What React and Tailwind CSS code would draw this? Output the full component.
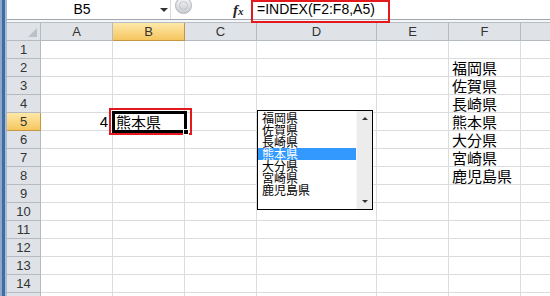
const cols = [
  { k: "A", w: "w-[72px]" },
  { k: "B", w: "w-[72px]" },
  { k: "C", w: "w-[72px]" },
  { k: "D", w: "w-[120px]" },
  { k: "E", w: "w-[72px]" },
  { k: "F", w: "w-[72px]" },
  { k: "G", w: "w-[72px]" },
];

const prefs = ["福岡県", "佐賀県", "長崎県", "熊本県", "大分県", "宮崎県", "鹿児島県"];

const cells = {};
prefs.forEach((p, i) => {
  cells[`F${i + 2}`] = p;
});
cells.A5 = "4";
cells.B5 = "熊本県";

const jp = { fontFamily: '"Noto Sans CJK JP", sans-serif' };
const latin = { fontFamily: '"Liberation Sans", Arial, sans-serif' };

const App = () => {
  const rows = Array.from({ length: 15 }, (_, i) => i + 1);

  return (
    <div className="relative w-[550px] h-[296px] overflow-hidden bg-white flex" style={latin}>
      {/* window edge */}
      <div className="flex shrink-0 h-full">
        <div className="w-[2px] bg-[#8fa8c8]" />
        <div className="w-[3px] bg-[#3e6ca4]" />
        <div className="w-[2px] bg-[#a8bbd3]" />
      </div>

      <div className="flex flex-col flex-1 min-w-0">
        {/* formula bar */}
        <div className="flex h-[20px] bg-white border-b border-[#9fa6ae] shrink-0">
          <div className="w-[150px] flex items-center justify-center text-[14px] text-black">B5</div>
          <div className="w-[13px] flex items-center justify-center">
            <div className="w-0 h-0 border-l-[4px] border-r-[4px] border-t-[4px] border-l-transparent border-r-transparent border-t-[#333]" />
          </div>
          <div className="w-px bg-[#d6d9dd]" />
          <div className="relative w-[80px]">
            <div className="absolute left-[4px] -top-[3px] w-[17px] h-[17px] rounded-full bg-linear-to-b from-[#f4f4f4] to-[#c9cdd2] border border-[#aeb3b9] flex items-center justify-center">
              <div className="w-[9px] h-[9px] rounded-full bg-linear-to-b from-[#e9eaec] to-[#d3d6da] border border-[#c3c7cc]" />
            </div>
            <span
              className="absolute left-[62px] top-[1px] text-[15px] font-bold italic text-[#222] leading-[18px]"
              style={{ fontFamily: '"Liberation Serif", serif' }}
            >
              f<span className="text-[11px]">x</span>
            </span>
          </div>
          <div className="flex-1 flex items-center pl-[6px] text-[14px] text-black">=INDEX(F2:F8,A5)</div>
        </div>
        <div className="h-[3px] bg-[#f3f5f7] border-b border-[#b9bec5] shrink-0" />

        {/* header row */}
        <div className="flex h-[18px] shrink-0">
          <div className="relative w-[34px] shrink-0 bg-[#dfe3e8] border-r border-b border-[#b5bac1]">
            <div className="absolute right-[3px] bottom-[3px] w-0 h-0 border-b-[9px] border-l-[9px] border-b-[#bcc1c7] border-l-transparent" />
          </div>
          {cols.map((c) => (
            <div
              key={c.k}
              className={
                c.k === "B"
                  ? `${c.w} shrink-0 flex items-center justify-center text-[13px] text-[#333] border-r border-b border-[#c39643] bg-linear-to-b from-[#fde8a8] to-[#f6c65e]`
                  : `${c.w} shrink-0 flex items-center justify-center text-[13px] text-[#333] border-r border-b border-[#b5bac1] bg-[#dfe3e8]`
              }
            >
              {c.k === "G" ? "" : c.k}
            </div>
          ))}
        </div>

        {/* rows */}
        {rows.map((r) => (
          <div key={r} className="flex h-[18px] shrink-0">
            <div
              className={
                r === 5
                  ? "w-[34px] shrink-0 flex items-center justify-center text-[13px] text-[#333] border-r border-b border-[#c39643] bg-linear-to-b from-[#fde8a8] to-[#f6c65e]"
                  : "w-[34px] shrink-0 flex items-center justify-center text-[13px] text-[#333] border-r border-b border-[#b5bac1] bg-[#dfe3e8]"
              }
            >
              {r < 15 ? r : ""}
            </div>
            {cols.map((c) => {
              const v = cells[`${c.k}${r}`];
              return (
                <div
                  key={c.k}
                  className={
                    c.k === "A"
                      ? `${c.w} shrink-0 border-r border-b border-[#dadcdd] flex items-end justify-end pr-[4px] text-[15px] leading-[17px] text-black`
                      : `${c.w} shrink-0 border-r border-b border-[#dadcdd] flex items-end pl-[3px] text-[15px] leading-[17px] text-black whitespace-nowrap`
                  }
                  style={c.k === "A" ? latin : jp}
                >
                  {v}
                </div>
              );
            })}
          </div>
        ))}
      </div>

      {/* active cell */}
      <div className="absolute left-[109px] top-[108px] w-[83px] h-[27px] border-2 border-[#e3191d]" />
      <div className="absolute left-[112px] top-[111px] w-[75px] h-[22px] border-[3px] border-black" />
      <div className="absolute left-[183px] top-[129px] w-[6px] h-[6px] bg-black border border-white" />

      {/* list box */}
      <div className="absolute left-[257px] top-[110px] w-[116px] h-[100px] border border-black bg-white flex">
        <div className="flex-1 pt-[1px]" style={jp}>
          {prefs.map((p) => (
            <div
              key={p}
              className={
                p === "熊本県"
                  ? "h-[12px] leading-[12px] text-[12px] pl-[4px] bg-[#3399ff] text-white"
                  : "h-[12px] leading-[12px] text-[12px] pl-[4px] text-black"
              }
            >
              {p}
            </div>
          ))}
        </div>
        <div className="w-[16px] bg-[#ececec] border-l border-[#f7f7f7] flex flex-col items-center justify-between py-[6px]">
          <div className="w-0 h-0 border-l-[3px] border-r-[3px] border-b-[3px] border-l-transparent border-r-transparent border-b-[#333]" />
          <div className="w-0 h-0 border-l-[3px] border-r-[3px] border-t-[3px] border-l-transparent border-r-transparent border-t-[#333]" />
        </div>
      </div>

      {/* formula highlight */}
      <div className="absolute left-[251px] top-0 w-[139px] h-[23px] border-2 border-[#e3191d]" />
    </div>
  );
};

export default App;
